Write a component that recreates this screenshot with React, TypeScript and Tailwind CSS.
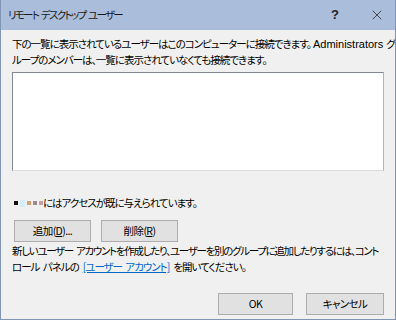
import { X } from 'lucide-react';

function Btn({ children, className = '' }: { children: React.ReactNode; className?: string }) {
  return (
    <button
      className={`h-[22px] bg-[#e1e1e1] border border-[#adadad] text-[10.5px] tracking-[-0.6px] leading-none text-[#000] flex items-center justify-center ${className}`}
    >
      {children}
    </button>
  );
}

const base = "h-[16px] flex items-center text-[10.5px] whitespace-pre [word-spacing:2px]";
const line = `${base} tracking-[-1px]`;
const latin = { fontFamily: '"Liberation Sans", sans-serif' };

export default function App() {
  return (
    <div
      className="w-[396px] h-[320px] bg-[#f0f0f0] border border-t-0 border-[#8094b5] flex flex-col text-[#000] [font-feature-settings:'palt'] overflow-hidden"
      style={{ fontFamily: '"Noto Sans CJK JP", "Liberation Sans", sans-serif' }}
    >
      {/* title bar */}
      <div className="h-[30px] shrink-0 bg-[#aabdda] flex items-center px-[7px]">
        <span className="text-[10.5px] tracking-[-1.7px] [word-spacing:2px] text-[#1a1a1a]">リモート デスクトップ ユーザー</span>
        <span className="ml-auto mr-[30px] text-[13px] font-bold text-[#222]" style={latin}>?</span>
        <X className="w-[16px] h-[16px] mr-[3px] text-[#333]" strokeWidth={1.25} />
      </div>

      <div className="flex flex-col px-[11px] pt-[6px]">
        <div className={line}>
          <span>下の一覧に表示されているユーザーはこのコンピューターに接続できます。</span>
          <span className="ml-[2px] text-[11px] tracking-normal" style={latin}>Administrators</span>
          <span className="ml-[3px]">グ</span>
        </div>
        <div className={line}>ループのメンバーは、一覧に表示されていなくても接続できます。</div>

        <div className="mt-[4px] h-[99px] w-[372px] bg-white border border-[#828790] border-r-[#b5b5b5] border-b-[#dcdcdc]" />

        <div className="mt-[24px] flex items-center h-[16px]">
          <div className="flex items-center gap-[2px] w-[31px] pl-[2px]">
            <span className="w-[4px] h-[4px] bg-[#111]" />
            <span className="w-[5px] h-[7px] bg-[#d5ecfa]" />
            <span className="w-[5px] h-[4px] bg-[#d0a070]" />
            <span className="w-[4px] h-[4px] bg-[#a08890]" />
            <span className="w-[4px] h-[4px] bg-[#c4a0a0]" />
          </div>
          <span className="text-[10.5px] whitespace-nowrap tracking-[-1px]">にはアクセスが既に与えられています。</span>
        </div>

        <div className="mt-[9px] flex gap-[10px] pl-[2px]">
          <Btn className="w-[77px]">
            追加(<span className="underline">D</span>)...
          </Btn>
          <Btn className="w-[77px]">
            削除(<span className="underline">R</span>)
          </Btn>
        </div>

        <div className={`mt-[1px] ${base} tracking-[-1.3px]`}>
          新しいユーザー アカウントを作成したり、ユーザーを別のグループに追加したりするには、コント
        </div>
        <div className={line}>
          <span>ロール パネルの</span>
          <span className="mx-[4px] text-[#0066cc] underline">[ユーザー アカウント]</span>
          <span>を開いてください。</span>
        </div>

        <div className="mt-[18px] flex justify-end gap-[13px]">
          <Btn className="w-[75px] border-[#0078d7]">OK</Btn>
          <Btn className="w-[78px]">キャンセル</Btn>
        </div>
      </div>
    </div>
  );
}
